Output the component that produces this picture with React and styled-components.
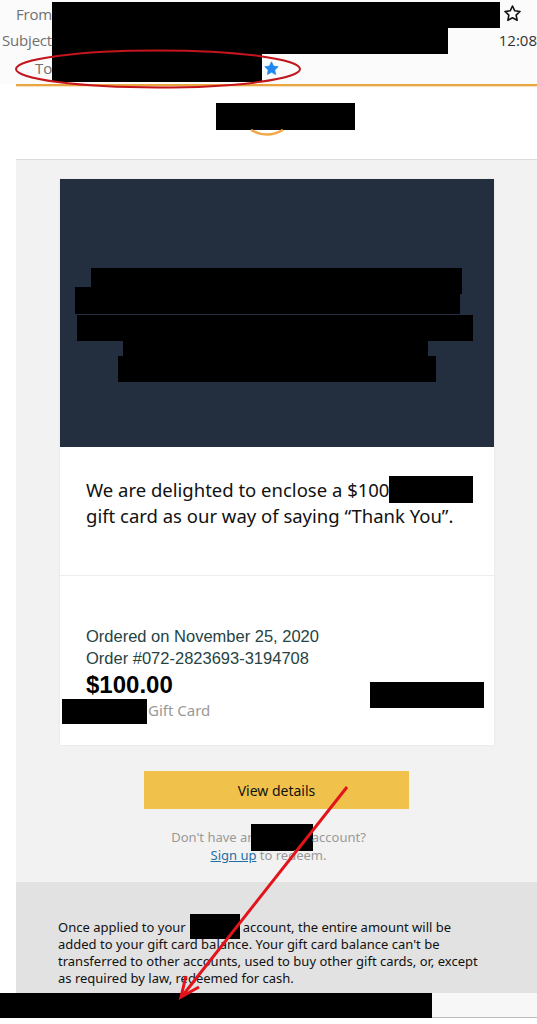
import React from 'react'
import styled, { createGlobalStyle } from 'styled-components'

const GlobalStyle = createGlobalStyle`
  html, body {
    margin: 0;
    padding: 0;
    background: #ffffff;
  }
`

const Page = styled.div`
  position: relative;
  width: 537px;
  height: 1024px;
  overflow: hidden;
  background: #ffffff;
  font-family: 'Open Sans', 'Noto Sans', sans-serif;
`

const MailHeader = styled.header`
  display: flex;
  flex-direction: column;
  height: 84px;
  background: #fbfbfb;
`

const HeaderRow = styled.div`
  display: flex;
  align-items: center;
  height: ${(p) => p.h}px;
  margin-top: ${(p) => p.mt || 0}px;
`

const Label = styled.span`
  width: 52px;
  flex: none;
  text-align: right;
  font-size: 15px;
  color: #707070;
  letter-spacing: -0.2px;
`

const Redact = styled.span`
  display: inline-block;
  flex: none;
  background: #000;
  width: ${(p) => p.w}px;
  height: ${(p) => p.h}px;
  margin: ${(p) => p.m || '0'};
  vertical-align: middle;
`

const Spacer = styled.span`
  flex: 1;
`

const Time = styled.span`
  font-size: 15px;
  color: #333;
  white-space: nowrap;
`

const StarIcon = styled.svg`
  flex: none;
  width: ${(p) => p.size}px;
  height: ${(p) => p.size}px;
  margin: ${(p) => p.m || '0'};
`

const OrangeRule = styled.div`
  height: 2px;
  margin-left: 16px;
  background: #e9a53f;
  box-shadow: 0 1px 1px rgba(233, 165, 63, 0.35);
`

const LogoBar = styled.div`
  display: flex;
  flex-direction: column;
  align-items: center;
  height: 73px;
  padding-top: 17px;
  padding-left: 34px;
  box-sizing: border-box;
`

const Logo = styled.div`
  display: flex;
  flex-direction: column;
  align-items: center;
`

const Smile = styled.svg`
  margin-right: 38px;
  margin-top: -1px;
`

const Panel = styled.main`
  margin-left: 16px;
  background: #f2f2f2;
  border-top: 1px solid #dcdcdc;
  padding-top: 19px;
  display: flex;
  flex-direction: column;
`

const Card = styled.section`
  margin-left: 44px;
  width: 434px;
  background: #fff;
  box-shadow: 0 0 2px rgba(0, 0, 0, 0.08);
`

const Hero = styled.div`
  position: relative;
  height: 268px;
  background: #232f3e;
`

const HeroRedact = styled.div`
  position: absolute;
  background: #000;
  left: ${(p) => p.x}px;
  top: ${(p) => p.y}px;
  width: ${(p) => p.w}px;
  height: ${(p) => p.h}px;
`

const Message = styled.div`
  padding: 30px 20px 0 26px;
  height: 129px;
  box-sizing: border-box;
  border-bottom: 1px solid #eeeeee;
  font-family: 'Noto Sans', 'Open Sans', sans-serif;
  font-size: 18.5px;
  line-height: 26px;
  color: #111;
`

const Order = styled.div`
  position: relative;
  padding: 49px 20px 21px 26px;
  font-family: 'Liberation Sans', Arial, sans-serif;
`

const OrderLine = styled.div`
  font-size: 16.5px;
  line-height: 22px;
  color: #264343;
`

const Amount = styled.div`
  font-size: 24px;
  font-weight: bold;
  line-height: 28px;
  color: #000;
  margin-top: 2px;
`

const CardType = styled.div`
  display: flex;
  align-items: center;
  margin: -4px 0 0 -24px;
  font-family: 'Noto Sans', 'Open Sans', sans-serif;
  font-size: 15px;
  color: #999;
  line-height: 22px;
`

const SideRedact = styled.div`
  position: absolute;
  right: 10px;
  top: 106px;
  width: 114px;
  height: 26px;
  background: #000;
`

const ButtonWrap = styled.div`
  display: flex;
  justify-content: center;
  margin-top: 26px;
`

const DetailsButton = styled.button`
  width: 265px;
  height: 38px;
  border: none;
  background: #f0c14b;
  font-family: 'Noto Sans', 'Open Sans', sans-serif;
  font-size: 14px;
  color: #111;
  cursor: pointer;
`

const SignUpNote = styled.p`
  margin: 20px 16px 0 0;
  text-align: center;
  font-family: 'Noto Sans', 'Open Sans', sans-serif;
  font-size: 13px;
  line-height: 17px;
  color: #999;
`

const SignUpLink = styled.a`
  color: #1d6fa5;
  text-decoration: underline;
`

const Legal = styled.div`
  margin-top: 18px;
  height: 111px;
  box-sizing: border-box;
  background: #e2e2e2;
  padding: 37px 50px 0 42px;
  font-family: 'Noto Sans', 'Open Sans', sans-serif;
  font-size: 13px;
  line-height: 17px;
  color: #111;
`

const Footer = styled.div`
  display: flex;
  height: 25px;
`

const FooterFill = styled.div`
  flex: 1;
  background: #f7f7f7;
  border-bottom: 1px solid #bdbdbd;
`

const Annotation = styled.svg`
  position: absolute;
  left: 0;
  top: 0;
  width: 537px;
  height: 1024px;
  pointer-events: none;
`

const Star = ({ size, filled, m }) => (
  <StarIcon size={size} m={m} viewBox="0 0 24 24">
    <path
      d="M12 2.5l2.9 6.1 6.6.8-4.9 4.6 1.3 6.6L12 17.3l-5.9 3.3 1.3-6.6-4.9-4.6 6.6-.8z"
      fill={filled ? '#1e88f0' : 'none'}
      stroke={filled ? '#1e88f0' : '#111'}
      strokeWidth={filled ? 1 : 2}
      strokeLinejoin="round"
    />
  </StarIcon>
)

export default () => (
  <Page>
    <GlobalStyle />
    <MailHeader>
      <HeaderRow h={28}>
        <Label>From</Label>
        <Redact w={448} h={26} m="2px 0 0 0" />
        <Star size={19} m="-2px 0 0 3px" />
      </HeaderRow>
      <HeaderRow h={28} mt={-2}>
        <Label>Subject</Label>
        <Redact w={396} h={28} />
        <Spacer />
        <Time>12:08</Time>
      </HeaderRow>
      <HeaderRow h={28}>
        <Label>To</Label>
        <Redact w={210} h={28} />
        <Star size={17} filled m="0 0 0 1px" />
      </HeaderRow>
    </MailHeader>
    <OrangeRule />
    <LogoBar>
      <Logo>
        <Redact w={139} h={27} />
        <Smile width="36" height="8" viewBox="0 0 36 8">
          <path d="M2 1 Q18 10 34 1" fill="none" stroke="#f3a847" strokeWidth="2.5" />
        </Smile>
      </Logo>
    </LogoBar>
    <Panel>
      <Card>
        <Hero>
          <HeroRedact x={31} y={89} w={371} h={26} />
          <HeroRedact x={15} y={108} w={385} h={27} />
          <HeroRedact x={17} y={136} w={396} h={26} />
          <HeroRedact x={63} y={155} w={305} h={24} />
          <HeroRedact x={58} y={177} w={318} h={26} />
        </Hero>
        <Message>
          We are delighted to enclose a $100
          <Redact w={84} h={27} m="-6px 0 0 0" />
          <br />
          gift card as our way of saying “Thank You”.
        </Message>
        <Order>
          <OrderLine>Ordered on November 25, 2020</OrderLine>
          <OrderLine>Order #072-2823693-3194708</OrderLine>
          <Amount>$100.00</Amount>
          <CardType>
            <Redact w={85} h={25} m="4px 1px 0 0" />
            Gift Card
          </CardType>
          <SideRedact />
        </Order>
      </Card>
      <ButtonWrap>
        <DetailsButton type="button">View details</DetailsButton>
      </ButtonWrap>
      <SignUpNote>
        Don't have an
        <Redact w={62} h={27} m="-6px -5px -4px -4px" />
        {' '}account?
        <br />
        <SignUpLink>Sign up</SignUpLink> to redeem.
      </SignUpNote>
      <Legal>
        Once applied to your
        <Redact w={50} h={25} m="-8px 3px -4px 4px" />
        account, the entire amount will be added to your gift card balance. Your gift
        card balance can't be transferred to other accounts, used to buy other gift
        cards, or, except as required by law, redeemed for cash.
      </Legal>
    </Panel>
    <Footer>
      <Redact w={432} h={25} />
      <FooterFill />
    </Footer>
    <Annotation viewBox="0 0 537 1024">
      <ellipse cx="158" cy="69" rx="142" ry="18.5" fill="none" stroke="#c4141c" strokeWidth="2" />
      <line x1="347" y1="787" x2="183" y2="995" stroke="#e3131b" strokeWidth="3" />
      <path d="M186 976 L181 997 L199 987" fill="none" stroke="#e3131b" strokeWidth="3" strokeLinejoin="miter" />
    </Annotation>
  </Page>
)
